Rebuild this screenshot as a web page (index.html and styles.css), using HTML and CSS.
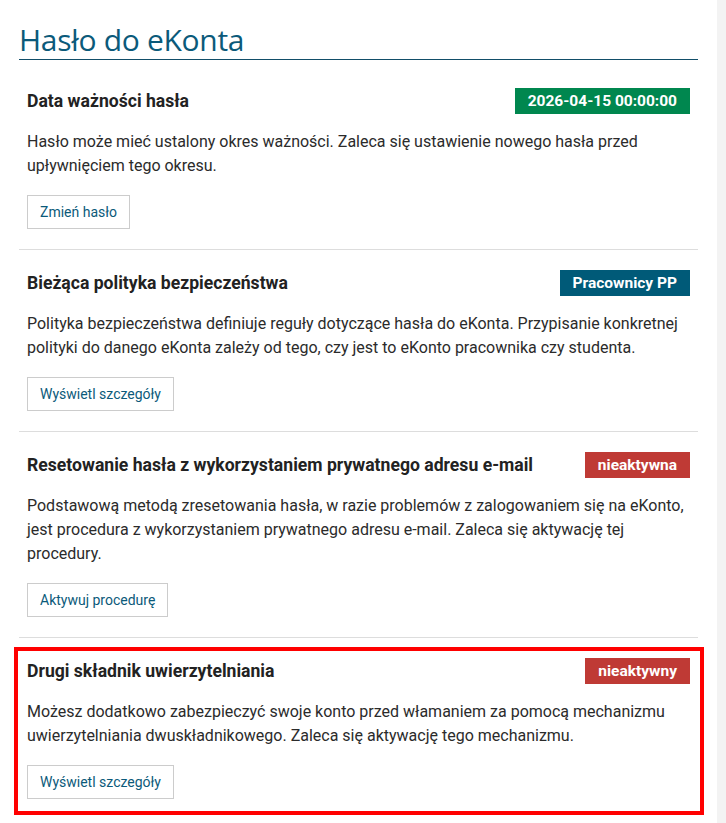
FILE: index.html
```html
<!DOCTYPE html>
<html lang="pl">
<head>
<meta charset="utf-8">
<title>Hasło do eKonta</title>
<link rel="stylesheet" href="styles.css">
</head>
<body>
<div class="page">
  <main class="main">
    <h1 class="title">Hasło do eKonta</h1>
    <section class="item">
      <div class="item-head">
        <h2 class="item-title">Data ważności hasła</h2>
        <span class="badge badge-green">2026-04-15 00:00:00</span>
      </div>
      <p class="item-text">Hasło może mieć ustalony okres ważności. Zaleca się ustawienie nowego hasła przed upływnięciem tego okresu.</p>
      <button class="btn">Zmień hasło</button>
    </section>
    <section class="item">
      <div class="item-head">
        <h2 class="item-title">Bieżąca polityka bezpieczeństwa</h2>
        <span class="badge badge-blue">Pracownicy PP</span>
      </div>
      <p class="item-text">Polityka bezpieczeństwa definiuje reguły dotyczące hasła do eKonta. Przypisanie konkretnej polityki do danego eKonta zależy od tego, czy jest to eKonto pracownika czy studenta.</p>
      <button class="btn">Wyświetl szczegóły</button>
    </section>
    <section class="item">
      <div class="item-head">
        <h2 class="item-title">Resetowanie hasła z wykorzystaniem prywatnego adresu e-mail</h2>
        <span class="badge badge-red">nieaktywna</span>
      </div>
      <p class="item-text">Podstawową metodą zresetowania hasła, w razie problemów z zalogowaniem się na eKonto, jest procedura z wykorzystaniem prywatnego adresu e-mail. Zaleca się aktywację tej procedury.</p>
      <button class="btn">Aktywuj procedurę</button>
    </section>
    <section class="item item-highlight">
      <div class="item-head">
        <h2 class="item-title">Drugi składnik uwierzytelniania</h2>
        <span class="badge badge-red">nieaktywny</span>
      </div>
      <p class="item-text">Możesz dodatkowo zabezpieczyć swoje konto przed włamaniem za pomocą mechanizmu uwierzytelniania dwuskładnikowego. Zaleca się aktywację tego mechanizmu.</p>
      <button class="btn">Wyświetl szczegóły</button>
    </section>
  </main>
  <div class="rail"></div>
</div>
</body>
</html>
```

FILE: styles.css
```css
html, body {
  margin: 0;
  padding: 0;
  background: #ffffff;
}

body {
  font-family: Roboto, "Liberation Sans", Arial, sans-serif;
  color: #2b2b2b;
}

.page {
  display: flex;
  min-height: 100vh;
}

.main {
  flex: 1;
  padding: 0 19px 0 19px;
  min-width: 0;
}

.rail {
  width: 9px;
  flex: 0 0 9px;
  background: #f3f3f3;
}

.title {
  margin: 0 0 8px 0;
  padding: 21px 0 0 0;
  font-family: "Open Sans", "Noto Sans", sans-serif;
  font-weight: 400;
  font-size: 30px;
  line-height: 38px;
  color: #0b5a7a;
  border-bottom: 1px solid #124e69;
  letter-spacing: -0.3px;
}

.item {
  padding: 20px 8px 20px 8px;
  border-bottom: 1px solid #dddddd;
}

.item-head {
  display: flex;
  justify-content: space-between;
  align-items: center;
  gap: 16px;
  min-height: 26px;
}

.item-title {
  margin: 0;
  font-size: 17.6px;
  font-weight: 700;
  line-height: 24px;
  color: #222222;
}

.badge {
  display: inline-block;
  flex: none;
  font-size: 15.5px;
  font-weight: 700;
  line-height: 26px;
  padding: 0 13px;
  color: #ffffff;
}

.badge-green { background: #00874f; }
.badge-blue { background: #005a78; }
.badge-red { background: #bf3a35; }

.item-text {
  margin: 16px 0 17px 0;
  font-size: 16px;
  line-height: 24px;
  color: #2b2b2b;
}

.btn {
  display: block;
  font-family: Roboto, "Liberation Sans", Arial, sans-serif;
  font-size: 14px;
  line-height: 20px;
  padding: 6px 12px;
  background: #ffffff;
  border: 1px solid #cccccc;
  border-radius: 0;
  color: #0b5a7a;
  cursor: pointer;
}

.item-highlight {
  border: 4px solid #ff0000;
  margin: 9px -6px 0 -5px;
  padding: 7px 10px 12px 9px;
}
```
